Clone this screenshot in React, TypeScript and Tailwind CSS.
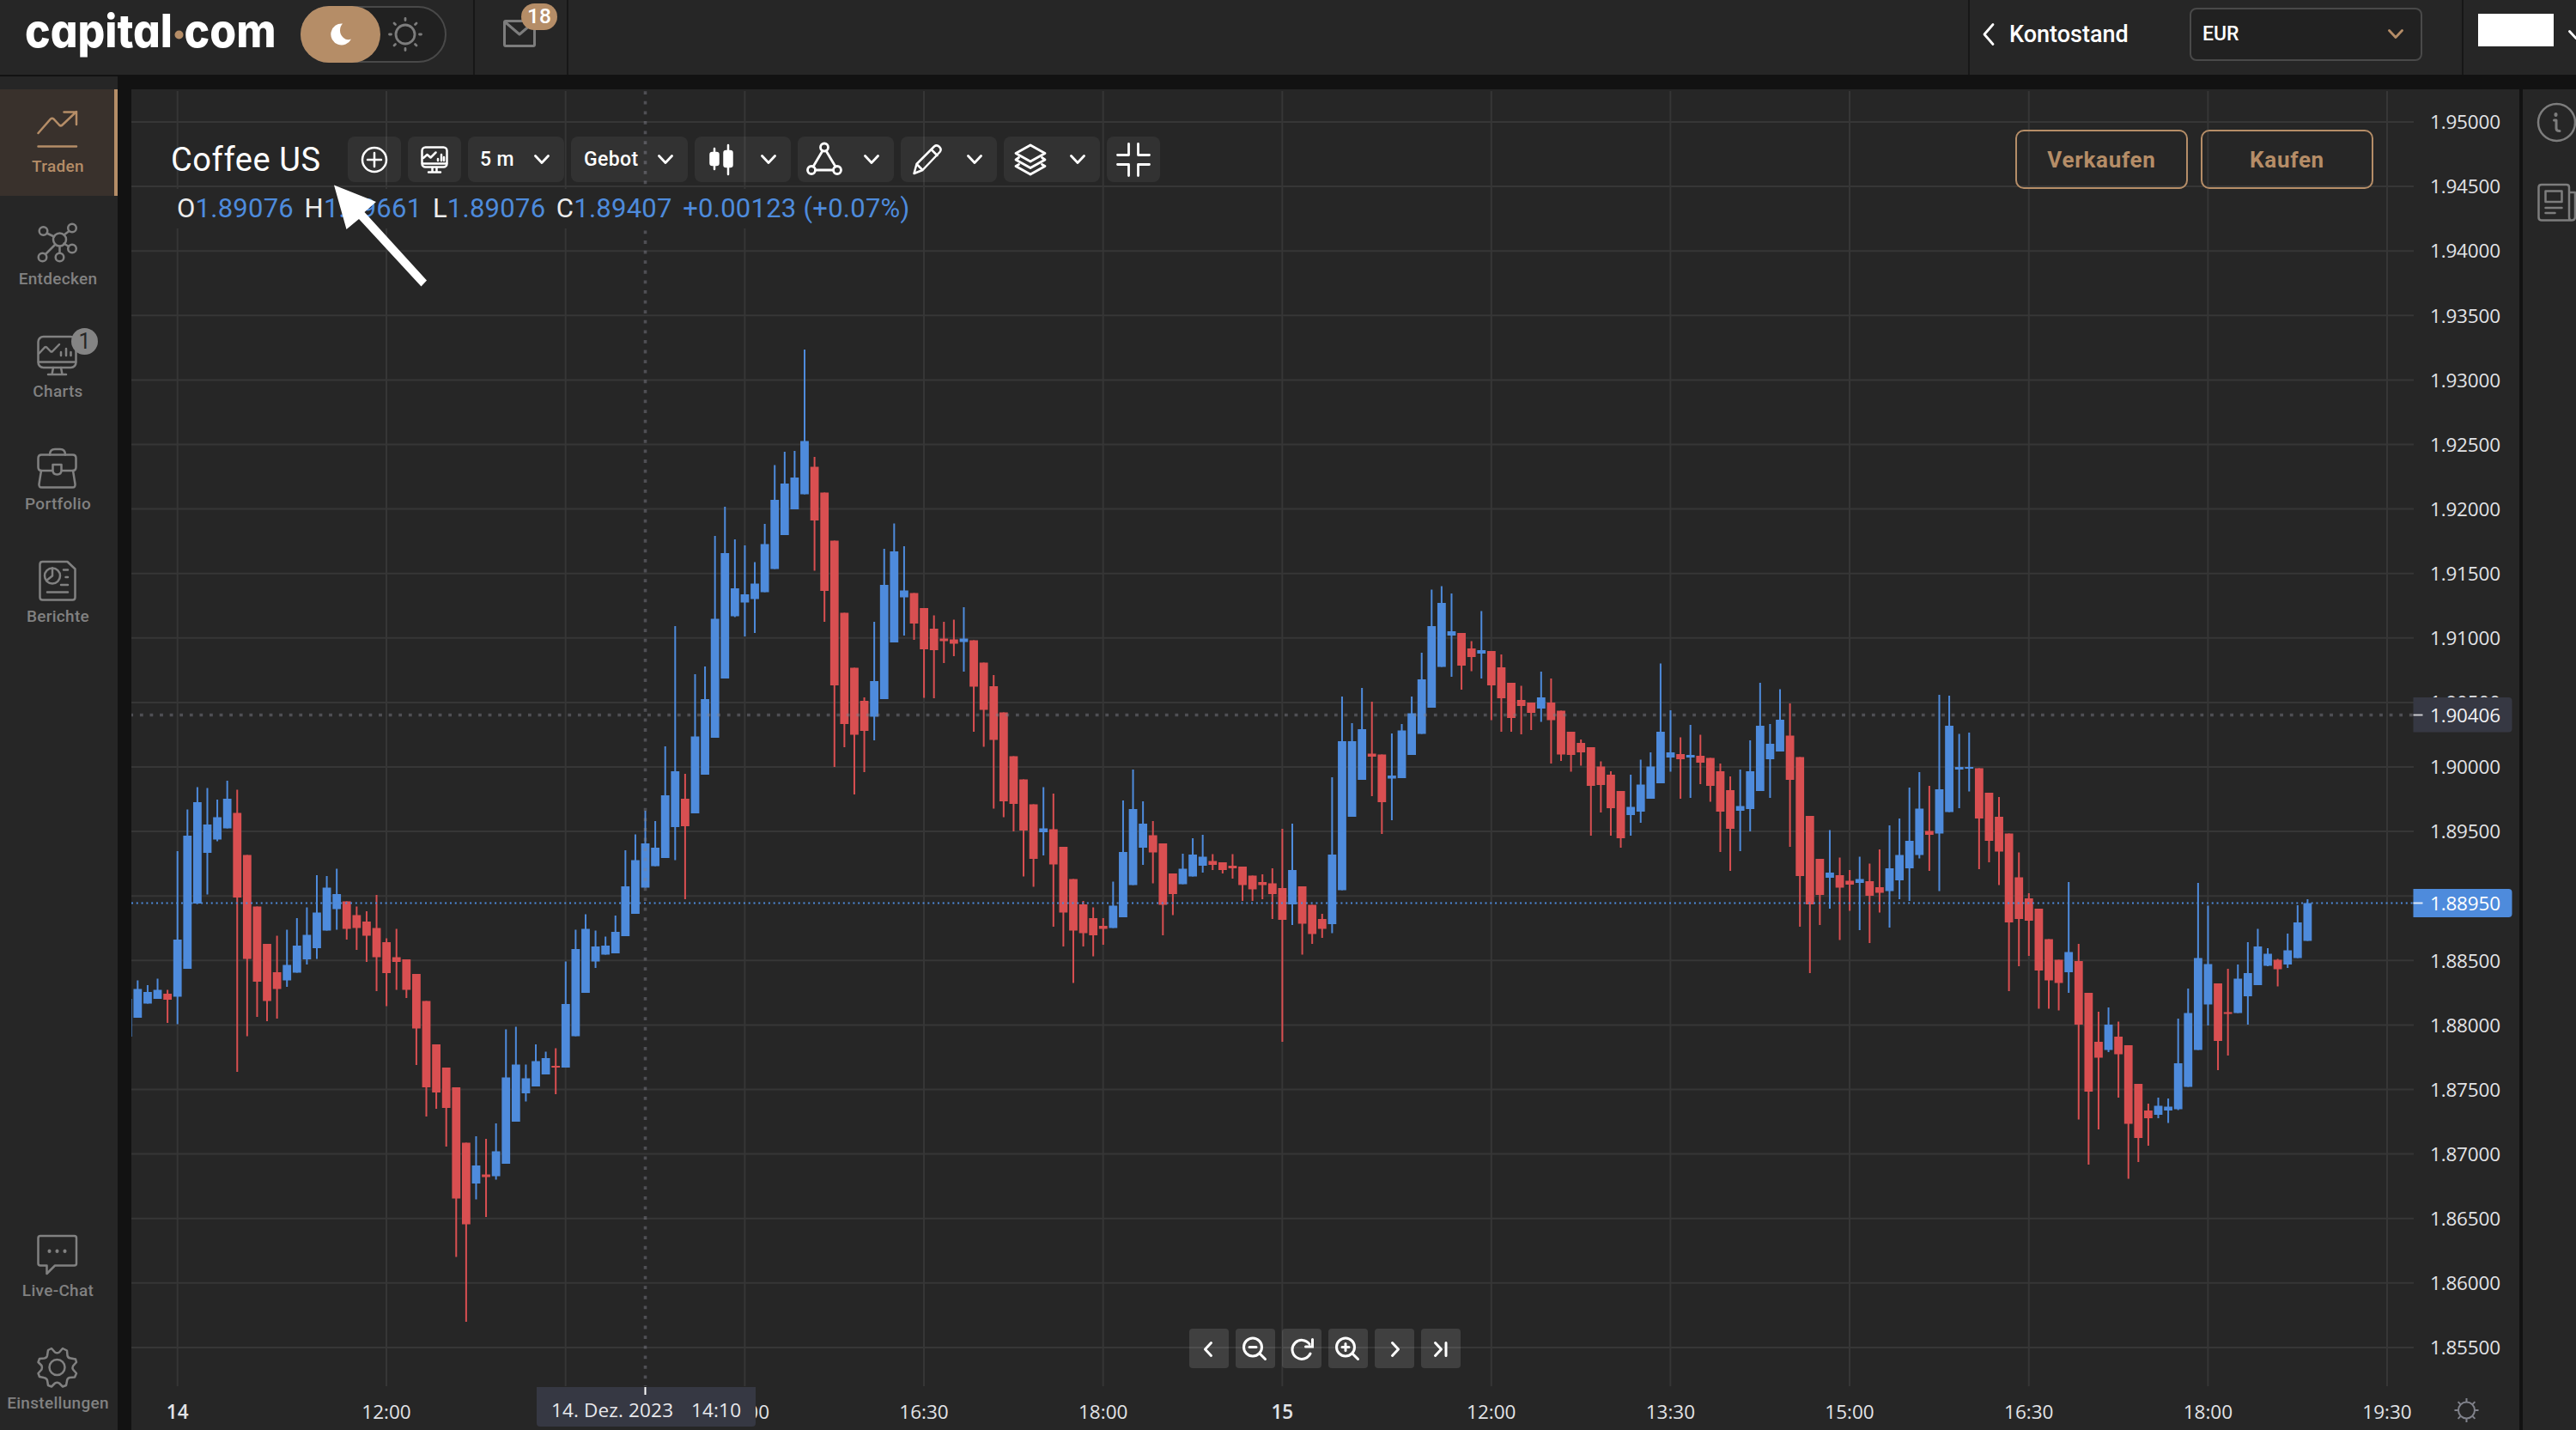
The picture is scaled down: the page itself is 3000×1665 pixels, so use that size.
import { type ReactNode } from "react";

// [high, bodyTop, bodyBottom, low, rising]
type Candle = [number, number, number, number, 0 | 1];

const FIRST_INDEX = -5;
const ORIGIN_X = 206.7;
const STEP_X = 11.592;

const candles: Candle[] = [
  [1163, 1163, 1207, 1207, 1], [1141.5, 1151.5, 1185, 1185, 1], [1147, 1155, 1168.5, 1168.5, 1],
  [1139.5, 1152.5, 1163, 1163, 1], [1152.5, 1157, 1164, 1191, 0], [991, 1094, 1160.5, 1192.5, 1],
  [942.5, 973, 1128, 1128, 1], [916.5, 934, 1052, 1052.5, 1], [917.5, 960, 993, 1041.5, 1],
  [931, 951.5, 977.5, 979.5, 1], [909, 930, 964.5, 964.5, 1], [919.5, 946.5, 1045, 1248, 0],
  [995.5, 995.5, 1116.5, 1206.5, 0], [1055.5, 1055.5, 1143, 1184, 0], [1099, 1099, 1165.5, 1189, 0],
  [1089.5, 1132, 1151.5, 1186, 0], [1082.5, 1123.5, 1141.5, 1149, 1], [1069, 1101, 1132.5, 1132.5, 1],
  [1056.5, 1088.5, 1117, 1123, 1], [1019, 1062.5, 1104, 1116.5, 1], [1020, 1033.5, 1083.5, 1083.5, 1],
  [1011.5, 1041, 1058.5, 1082.5, 1], [1049.5, 1049.5, 1081.5, 1094, 0], [1055.5, 1065.5, 1080.5, 1106, 0],
  [1061, 1073, 1089.5, 1120, 0], [1042, 1080.5, 1114.5, 1154, 0], [1092.5, 1097, 1133, 1171.5, 0],
  [1081.5, 1114.5, 1120, 1152.5, 0], [1117, 1117, 1152.5, 1162, 0], [1134, 1134, 1197.5, 1240, 0],
  [1165.5, 1165.5, 1266, 1300, 0], [1216, 1216, 1272, 1291, 0], [1243, 1243, 1290, 1335, 0],
  [1266, 1266, 1395.5, 1463.5, 0], [1330.5, 1330.5, 1425.5, 1539, 0], [1323, 1357, 1378, 1396.5, 1],
  [1326, 1367.5, 1370.5, 1417, 0], [1308, 1340.5, 1369.5, 1373.5, 1], [1198.5, 1254.5, 1355, 1355, 1],
  [1195.5, 1239.5, 1306, 1306, 1], [1239.5, 1255.5, 1273, 1282.5, 1], [1216, 1235.5, 1265, 1265, 1],
  [1224.5, 1232, 1251, 1251, 1], [1220.5, 1241, 1243, 1274, 0], [1119.5, 1169, 1243, 1243, 1],
  [1082.5, 1105, 1206.5, 1206.5, 1], [1064.5, 1081.5, 1156, 1156, 1], [1083.5, 1102, 1119.5, 1127, 1],
  [1090.5, 1101, 1111.5, 1111.5, 1], [1066, 1085, 1110, 1110, 1], [990, 1032, 1090, 1090, 1],
  [971.5, 1001.5, 1064, 1064, 1], [944, 982, 1033.5, 1033.5, 1], [956, 987, 1008.5, 1008.5, 1],
  [869, 926, 999, 999, 1], [729, 898, 963, 1001.5, 1], [901, 930, 962, 1047, 0],
  [785, 857.5, 947, 947, 1], [776, 814, 902, 902, 1], [624, 720.5, 859, 859, 1],
  [590, 644, 790, 790, 1], [628, 685, 717.5, 718.5, 1], [635, 692, 701.5, 741, 1],
  [654.5, 679.5, 697.5, 737, 1], [610, 633.5, 689.5, 689.5, 1], [541.5, 582, 662.5, 662.5, 1],
  [526, 563, 623, 623, 1], [525, 556, 593, 593, 1], [407, 513.5, 575.5, 575.5, 1],
  [532, 543.5, 606, 664.5, 0], [573.5, 573.5, 688, 724, 0], [629.5, 629.5, 798, 893, 0],
  [713.5, 713.5, 843, 870, 0], [777.5, 777.5, 855.5, 925, 0], [812, 816, 851, 899, 0],
  [724, 793, 834.5, 862, 1], [639, 681, 814, 814, 1], [609.5, 642, 748, 748, 1],
  [636, 687.5, 695.5, 740, 1], [690.5, 690.5, 726, 745, 0], [708, 708, 756, 812.5, 0],
  [716.5, 732, 757, 813, 0], [724, 743.5, 746.5, 772, 0], [721.5, 744.5, 749.5, 764, 0],
  [707, 743.5, 747.5, 782, 1], [745.5, 745.5, 799.5, 852, 0], [771.5, 771.5, 826.5, 869.5, 0],
  [786, 799, 861.5, 941.5, 0], [829.5, 829.5, 933, 951.5, 0], [880.5, 880.5, 936, 968, 0],
  [907.5, 907.5, 967, 1020.5, 0], [936.5, 936.5, 1000, 1032.5, 0], [916.5, 964.5, 969, 996, 1],
  [924, 965.5, 1006.5, 1079, 0], [986, 986, 1062.5, 1102, 0], [1023.5, 1023.5, 1083.5, 1144.5, 0],
  [1049, 1053, 1086.5, 1102, 0], [1056.5, 1069, 1089, 1113.5, 0], [1069, 1078, 1081.5, 1100, 0],
  [1026.5, 1054.5, 1080.5, 1080.5, 1], [932, 992, 1068, 1068, 1], [896, 942, 1030.5, 1030.5, 1],
  [933, 959, 987, 1007, 1], [956, 972.5, 992.5, 1028.5, 0], [982, 982, 1053.5, 1089, 0],
  [1017, 1017, 1041, 1065.5, 0], [994, 1011.5, 1029.5, 1029.5, 1], [976, 995, 1020.5, 1020.5, 1],
  [972, 997.5, 1008, 1016, 1], [994.5, 1002.5, 1007, 1013, 0], [1004, 1004, 1013, 1017, 0],
  [994.5, 1008, 1011, 1023, 0], [1009, 1009, 1030.5, 1049, 0], [1019.5, 1019.5, 1035.5, 1049, 0],
  [1018, 1027, 1030.5, 1047, 0], [1011, 1028.5, 1041, 1070, 0], [965, 1034, 1071, 1213, 0],
  [959, 1013, 1053, 1077, 1], [1032, 1032, 1075.5, 1111.5, 0], [1053.5, 1053.5, 1087.5, 1099, 0],
  [1064, 1070, 1081.5, 1092, 0], [905, 995, 1076, 1086.5, 1], [811, 863, 1036.5, 1036.5, 1],
  [842, 863, 951, 951, 1], [801, 849, 908, 908, 1], [817, 877.5, 881, 927, 0],
  [878.5, 878.5, 934, 971, 0], [854, 903, 906.5, 955, 1], [843, 850.5, 906, 906, 1],
  [811, 830.5, 879, 879, 1], [760, 791, 854.5, 854.5, 1], [686.5, 729, 824, 824, 1],
  [682.5, 702, 776.5, 776.5, 1], [691, 735, 740, 788, 1], [737, 737, 775, 803, 0],
  [746.5, 755, 765, 781.5, 0], [711.5, 757, 761, 790, 1], [758, 758, 798, 838.5, 0],
  [762, 777, 813, 852, 0], [795, 795, 836, 852, 0], [798.5, 815, 822, 855, 0],
  [818, 818, 830, 850, 0], [782, 812, 825, 840.5, 1], [790, 818, 838.5, 889, 0],
  [827.5, 827.5, 878.5, 886, 0], [852, 852, 879, 898.5, 0], [861, 865, 876, 891.5, 0],
  [870, 870, 915, 973, 0], [886.5, 892.5, 914, 946, 0], [898, 902, 941, 973, 0],
  [921, 921, 976, 987, 0], [902, 939.5, 949, 973, 1], [884.5, 913.5, 945, 958, 1],
  [876, 892.5, 930, 930, 1], [772.5, 852, 912, 912, 1], [827, 876, 882, 898.5, 1],
  [858.5, 878, 884, 930, 0], [844, 879, 882, 929, 1], [855.5, 880, 888, 913, 0],
  [882.5, 882.5, 915, 933.5, 0], [889, 898, 945, 992, 0], [904, 920, 965, 1014, 0],
  [896, 938.5, 944, 991, 1], [862, 898, 942, 968, 1], [795, 845, 921, 921, 1],
  [843, 866, 884, 929, 1], [802.5, 838, 875, 875, 1], [819, 856.5, 908, 986, 0],
  [881.5, 881.5, 1020, 1079, 0], [950, 950, 1053, 1133, 0], [1000, 1000, 1042, 1077, 0],
  [966.5, 1016, 1022, 1058, 1], [998.5, 1019, 1033.5, 1094.5, 0], [1013, 1025.5, 1030, 1060.5, 0],
  [997.5, 1023.5, 1028, 1083, 1], [1005.5, 1026, 1043, 1098, 0], [989, 1033, 1039.5, 1062.5, 0],
  [961, 1011, 1037.5, 1080, 1], [953, 995.5, 1025, 1047, 1], [917, 979, 1011, 1049, 1],
  [899, 941.5, 995.5, 999.5, 1], [915, 967.5, 972, 1014, 0], [809, 919, 970.5, 1037.5, 1],
  [810, 845, 945.5, 945.5, 1], [854.5, 893, 896, 941, 1], [853, 893, 895, 921.5, 1],
  [894.5, 894.5, 953, 1012, 0], [923, 923, 979, 1004, 0], [928, 951, 991.5, 1030.5, 0],
  [970.5, 970.5, 1074, 1154, 0], [992.5, 1021.5, 1070, 1125, 0], [1040, 1046, 1072, 1113, 0],
  [1058, 1058, 1130, 1174.5, 0], [1093.5, 1093.5, 1141.5, 1174.5, 0], [1117.5, 1117.5, 1144.5, 1176.5, 0],
  [1027, 1108.5, 1132, 1156, 1], [1099, 1119, 1193, 1303.5, 0], [1156, 1156, 1271, 1356, 0],
  [1178, 1213, 1231.5, 1315, 0], [1173, 1193, 1222.5, 1225, 1], [1189.5, 1207, 1227.5, 1278, 0],
  [1217, 1217, 1308.5, 1372.5, 0], [1262, 1262, 1325, 1353, 0], [1285, 1293, 1302, 1334, 0],
  [1278, 1287.5, 1298, 1302, 1], [1279, 1288.5, 1293, 1307.5, 1], [1186, 1238, 1291.5, 1292.5, 1],
  [1151, 1179.5, 1265.5, 1265.5, 1], [1028, 1115.5, 1222.5, 1222.5, 1], [1054.5, 1122.5, 1169.5, 1194, 1],
  [1145, 1145, 1212, 1246, 0], [1128, 1178.5, 1180.5, 1229, 0], [1123, 1139.5, 1179.5, 1179.5, 1],
  [1097, 1133, 1160, 1193, 1], [1081.5, 1102, 1147, 1147, 1], [1104, 1110.5, 1124.5, 1125, 1],
  [1116.5, 1117.5, 1128.5, 1148.5, 0], [1087, 1106.5, 1123, 1127, 1], [1054, 1074, 1115.5, 1115.5, 1],
  [1047, 1051.5, 1095.5, 1095.5, 1],
];

const prices = Array.from({ length: 20 }, (_, i) => ({
  label: (1.95 - i * 0.005).toFixed(5),
  y: 142 + i * 75.1,
}));

const times = [
  { x: 206.7, label: "14", strong: true },
  { x: 450, label: "12:00" },
  { x: 658.7, label: "13:30" },
  { x: 867.4, label: "15:00" },
  { x: 1076, label: "16:30" },
  { x: 1284.7, label: "18:00" },
  { x: 1493.3, label: "15", strong: true },
  { x: 1736.8, label: "12:00" },
  { x: 1945.4, label: "13:30" },
  { x: 2154, label: "15:00" },
  { x: 2362.8, label: "16:30" },
  { x: 2571.4, label: "18:00" },
  { x: 2780, label: "19:30" },
];

function Chart() {
  return (
    <svg
      width="2781"
      height="1561"
      viewBox="153 104 2781 1561"
      className="block font-['Open_Sans',sans-serif] text-[22.5px]"
    >
      <g stroke="#363636" strokeWidth="2">
        {prices.map((p) => (
          <line key={p.label} x1="153" x2="2811" y1={p.y} y2={p.y} />
        ))}
        {times.map((t) => (
          <line key={t.x} x1={t.x} x2={t.x} y1="106" y2="1614" />
        ))}
      </g>
      {candles.map(([high, top, bottom, low, rising], i) => {
        const x = ORIGIN_X + (FIRST_INDEX + i) * STEP_X;
        return (
          <g key={i} fill={rising ? "#4e8bdc" : "#d94f51"}>
            <rect x={x - 1} y={high} width="2" height={low - high} />
            <rect x={x - 4.9} y={top} width="9.8" height={bottom - top} />
          </g>
        );
      })}
      <line x1="153" x2="2810" y1="1051.5" y2="1051.5" stroke="#4e8bdc" strokeWidth="1.8" strokeDasharray="2 3.796" />
      <g stroke="#82838f" strokeOpacity="0.45" strokeWidth="3.6">
        <line x1="151.3" x2="2810" y1="832.5" y2="832.5" strokeDasharray="3.8 7.792" />
        <line x1="751.5" x2="751.5" y1="106.2" y2="1614" strokeDasharray="3.8 7.792" />
      </g>

      <g fill="#e2e3e6">
        {prices.map((p) => (
          <text key={p.label} x="2830" y={p.y + 8.2} textLength="82">
            {p.label}
          </text>
        ))}
        {times.map((t) => (
          <text
            key={t.x}
            x={t.x}
            y="1651.5"
            textAnchor="middle"
            className={t.strong ? "font-semibold" : "font-normal"}
          >
            {t.label}
          </text>
        ))}
      </g>

      <path d="M2810.5 812h111q4 0 4 4v32.500q0 4-4 4h-111z" fill="#363843" />
      <path d="M2810.500 832.500h11" stroke="#c9cacf" strokeWidth="2" />
      <text x="2830" y="840.5" textLength="82" fill="#f0f0f3">1.90406</text>

      <path d="M2810.500 1035h111q4 0 4 4v25q0 4-4 4h-111z" fill="#4e8bdc" />
      <path d="M2810.500 1051.500h11" stroke="#dbe7f8" strokeWidth="2" />
      <text x="2830" y="1059.5" textLength="82" fill="#ffffff">1.88950</text>

      <path d="M625 1615h255v42q0 4-4 4h-247q-4 0-4-4z" fill="#363843" />
      <path d="M751.500 1615v9" stroke="#ffffff" strokeWidth="2" />
      <text x="642" y="1650" textLength="142" fill="#e8e8ec">14. Dez. 2023</text>
      <text x="805" y="1650" textLength="58" fill="#e8e8ec">14:10</text>

      <g fill="none" stroke="#80828b" strokeWidth="2">
        <circle cx="2872.500" cy="1642" r="9.500" />
        <path d="M2872.500 1628v4M2872.500 1652v4M2858.500 1642h4M2882.500 1642h4M2862.600 1632.100l2.800 2.800M2879.600 1649.100l2.800 2.800M2862.600 1651.900l2.800-2.800M2879.600 1634.900l2.800-2.800" />
      </g>
    </svg>
  );
}

function Icon({ size = 48, width = 2.5, children }: { size?: number; width?: number; children: ReactNode }) {
  return (
    <svg
      width={size}
      height={size}
      viewBox={`0 0 ${size} ${size}`}
      fill="none"
      stroke="currentColor"
      strokeWidth={width}
      strokeLinecap="round"
      strokeLinejoin="round"
      className="block shrink-0"
    >
      {children}
    </svg>
  );
}

const TradeIcon = () => (
  <Icon>
    <path d="M1.500 27 16 10.500q1.800-1.500 3.400 0l6.600 7q1.800 1.800 3.600 0L46 2M31.500 2.500H46V17M1.500 42.500H46" strokeLinejoin="miter" />
  </Icon>
);

const DiscoverIcon = () => (
  <Icon>
    <circle cx="26.500" cy="20" r="7.500" />
    <circle cx="7.500" cy="10" r="4.800" />
    <circle cx="41" cy="6.500" r="4.800" />
    <circle cx="41" cy="30.500" r="4.800" />
    <circle cx="6.500" cy="40.500" r="4.800" />
    <circle cx="26.500" cy="40.500" r="4.800" />
    <path d="M11.500 12.500l8.500 4M37.500 10l-6 4.500M37 28l-5.500-3.500M10 37l11.500-11.500M26.500 28v7.500" />
  </Icon>
);

const ChartsIcon = () => (
  <Icon>
    <rect x="1.500" y="2" width="44" height="36" rx="6" />
    <path d="M2 31.500h43M2.500 21.500l6.500-7q1.200-1 2.400 0l4.400 4.500q1.200 1 2.400 0L26 11M28 20v4M34 16v8M39.500 20v4M19 38l-1.500 8M28 38l1.500 8M13 46h21" />
  </Icon>
);

const PortfolioIcon = () => (
  <Icon>
    <path d="M15 8.500Q15 2 21 2h6q6 0 6 6.500" />
    <path d="M5.500 8.500h36q4 0 4 4V23q0 4-4 4h-36q-4 0-4-4V12.500q0-4 4-4z" />
    <path d="M5 27 2.500 42.500q-.5 4 3 4h36q3.500 0 3-4L42 27" />
    <path d="M18.500 20h10v6.500q0 5-5 5t-5-5z" fill="#262626" />
  </Icon>
);

const ReportsIcon = () => (
  <Icon>
    <path d="M6.500 2h29l9 8.500V43.500q0 3-3 3h-35q-3 0-3-3V5q0-3 3-3z" />
    <circle cx="18" cy="18.500" r="9" />
    <path d="M18 9.500v9l-7 5.500M31 11.500h5M33.500 20h2.500M28 29h8M12 37.500h24" />
  </Icon>
);

const ChatIcon = () => (
  <Icon>
    <path d="M4 2h39.500q2.500 0 2.500 2.500V34q0 2.500-2.500 2.500H21L11.500 46v-9.500H4Q1.500 36.500 1.500 34V4.500Q1.500 2 4 2z" />
    <path d="M14.500 19.500v.5M23.500 19.500v.5M32.500 19.500v.5" strokeWidth="4" />
  </Icon>
);

const GearIcon = () => (
  <Icon>
    <circle cx="23.500" cy="24" r="9" />
    <path d="M17 2l4 4.500q2.500 1.500 5 0L30 2l5 2.500.500 6q1 3 4 3L45 14.500l1 3.500-4 4.500q-1 2 0 4L46 31l-2 4.500-6 .5q-3 1-3 4L34 45l-4 1.500-4-4q-2.500-1.500-5 0l-4 4L13 45l-1-6q-1-2.500-4-3l-5-1-1.500-4 4-4.500q1-2 0-4.500L1.500 18 3 14l5.500-.5q3-.5 3.500-3L13 4z" />
  </Icon>
);

const Chevron = () => (
  <Icon size={18} width={2.8}>
    <path d="M1.500 4.500 9 12.500l7.500-8" />
  </Icon>
);

function NavItem({ label, active, badge, children }: { label: string; active?: boolean; badge?: string; children: ReactNode }) {
  return (
    <a
      className={
        active
          ? "relative flex h-[124px] shrink-0 flex-col items-center border-r-4 border-[#b58d67] bg-[#39312c] pt-6 text-[#b58d67]"
          : "relative flex h-[124px] shrink-0 flex-col items-center border-r-4 border-transparent pt-6 text-[#818181]"
      }
    >
      {children}
      <span className="mt-[6px] ml-[2px] text-[19px] leading-6 font-medium tracking-[0.3px] whitespace-nowrap">{label}</span>
      {badge && (
        <span className="absolute top-[16px] left-[83px] flex size-[31px] items-center justify-center rounded-full bg-[#848484] text-[25px] text-[#262626]">
          {badge}
        </span>
      )}
    </a>
  );
}

function ToolButton({ wide, children }: { wide?: boolean; children: ReactNode }) {
  return (
    <button
      className={
        wide
          ? "flex h-[53px] w-[112px] items-center justify-between rounded-lg bg-white/[0.06] pr-[17px] pl-[10px]"
          : "flex h-[53px] w-[62px] items-center justify-center rounded-lg bg-white/[0.06]"
      }
    >
      {children}
      {wide && <Chevron />}
    </button>
  );
}

function Toolbar() {
  return (
    <div className="absolute top-[55px] left-[46px] flex h-[53px] items-center text-white">
      <h1 className="w-[206px] text-[38px] leading-none tracking-[0.6px] whitespace-nowrap">Coffee US</h1>
      <div className="flex gap-2 text-[23px] font-medium">
        <ToolButton>
          <Icon size={34}>
            <circle cx="17" cy="17" r="14" />
            <path d="M17 9v16M9 17h16" />
          </Icon>
        </ToolButton>
        <ToolButton>
          <Icon size={34}>
            <rect x="2.500" y="2.500" width="29" height="23" rx="4" />
            <path d="M3 21.500h28M4 15l4.500-4 4 3.500 6-6M21 16v2M25 11v7M28 14v4M14.500 26v5M19.500 26v5M10 31.500h14" />
          </Icon>
        </ToolButton>
        <button className="flex h-[53px] w-[112px] items-center justify-between rounded-lg bg-white/[0.06] pt-px pr-[17px] pl-[14px] tracking-[0.4px]">
          5 m
          <Chevron />
        </button>
        <button className="flex h-[53px] w-[136px] items-center justify-between rounded-lg bg-white/[0.06] pt-px pr-[17px] pl-[15px] tracking-[0.4px]">
          Gebot
          <Chevron />
        </button>
        <ToolButton wide>
          <Icon size={42}>
            <g fill="currentColor">
              <rect x="8.500" y="13" width="9" height="14" rx="2" />
              <rect x="24.500" y="11" width="9" height="18" rx="2" />
            </g>
            <path d="M13 8v24M29 4v34" />
          </Icon>
        </ToolButton>
        <ToolButton wide>
          <Icon size={42} width={2.8}>
            <circle cx="21" cy="6.500" r="4.500" />
            <circle cx="6" cy="33" r="4.500" />
            <circle cx="36" cy="33" r="4.500" />
            <path d="M19 10.500 8 29M23 10.500 34 29M10.500 33h21" />
          </Icon>
        </ToolButton>
        <ToolButton wide>
          <Icon size={42}>
            <path d="M5.500 37l3-11L29 5.500q3-2.500 6 .5t.500 6L15.500 33zM8.500 26l7 7M25.500 9l7 7" />
          </Icon>
        </ToolButton>
        <ToolButton wide>
          <Icon size={42} width={2.8}>
            <path d="M21 4 38 13.500 21 23 4 13.500z" />
            <path d="M7.500 18.500 4 21l17 9.500L38 21l-3.500-2.500M7.500 26.500 4 28.500 21 38l17-9.500-3.500-2" />
          </Icon>
        </ToolButton>
        <ToolButton>
          <Icon size={42} width={2.8}>
            <path d="M2.500 15.500H15.500V2.500M26.500 2.500V15.500H39.500M2.500 26.500H15.500V39.500M26.500 39.500V26.500H39.500" />
          </Icon>
        </ToolButton>
      </div>
    </div>
  );
}

const ohlc = [
  ["O", "1.89076"],
  ["H", "1.89661"],
  ["L", "1.89076"],
  ["C", "1.89407"],
];

function Legend() {
  return (
    <div className="absolute top-[116px] left-[46px] flex h-[46px] w-[872px] items-center gap-[12.5px] bg-[#262626] pl-[7px] text-[31px] tracking-[0.25px] whitespace-nowrap text-[#4e8bdc]">
      {ohlc.map(([key, value]) => (
        <span key={key}>
          <span className="text-[#ececec]">{key}</span>
          {value}
        </span>
      ))}
      <span>+0.00123 (+0.07%)</span>
    </div>
  );
}

function PlayerButton({ children }: { children: ReactNode }) {
  return (
    <button className="flex size-[46px] items-center justify-center rounded bg-white/[0.12] text-white">
      <Icon size={34} width={3}>
        {children}
      </Icon>
    </button>
  );
}

function NavigationControls() {
  return (
    <div className="absolute top-[1443px] left-[1232px] flex gap-2">
      <PlayerButton>
        <path d="M19.500 10.500l-7 7.500 7 7.500" />
      </PlayerButton>
      <PlayerButton>
        <circle cx="14" cy="15.500" r="10.500" />
        <path d="M22 23l6.500 6.500M10 15.500h8" />
      </PlayerButton>
      <PlayerButton>
        <path d="M27 23A11 11 0 1 1 26 12M29.500 6.500v8.500h-8" strokeLinejoin="miter" />
      </PlayerButton>
      <PlayerButton>
        <circle cx="14" cy="15.500" r="10.500" />
        <path d="M22 23l6.500 6.500M10 15.500h8M14 11.500v8" />
      </PlayerButton>
      <PlayerButton>
        <path d="M14.500 10.500l7 7.500-7 7.500" />
      </PlayerButton>
      <PlayerButton>
        <path d="M10.500 10.500l7 7.500-7 7.500M23 10.500v15" />
      </PlayerButton>
    </div>
  );
}

function Header() {
  return (
    <header className="flex h-[87px] shrink-0 items-stretch bg-[#262626]">
      <div className="flex w-[551px] shrink-0 pt-[7px] pl-[29px]">
        <div className="flex h-[66px] w-[321px] items-center font-['Inter',sans-serif] text-[54px] leading-none font-extrabold text-white [font-feature-settings:'cv11']">
          <svg width="292" height="66" viewBox="0 0 292 66" className="block overflow-visible fill-white">
            <text x="0" y="48" textLength="172" lengthAdjust="spacingAndGlyphs">capital</text>
            <circle cx="179.500" cy="33.500" r="5" fill="#b58d67" />
            <text x="185.500" y="48" textLength="107" lengthAdjust="spacingAndGlyphs">com</text>
          </svg>
        </div>
        <div className="flex h-[66px] w-[170px] rounded-full border-2 border-[#494949] bg-[#212121]">
          <div className="-mt-0.5 -ml-0.5 flex h-[66px] w-[93px] items-center justify-center rounded-full bg-[#b58d67]">
            <svg width="26" height="28" viewBox="0 0 26 28" fill="#ffffff">
              <path d="M15 1.500A12.500 12.500 0 1 0 25 19.500Q20 21.500 16 18T12 9.500Q12 4.500 15 1.500z" />
            </svg>
          </div>
          <div className="flex w-[57px] items-center justify-center text-[#7d7d7d]">
            <Icon size={42} width={2.8}>
              <circle cx="21" cy="21" r="11" />
              <path d="M21 2.500v2M21 37.500v2M2.500 21h2M37.500 21h2M8 8l1.500 1.500M32.500 32.500 34 34M8 34l1.500-1.500M32.500 9.500 34 8" />
            </Icon>
          </div>
        </div>
      </div>
      <div className="relative w-[111px] border-x-2 border-[#171717] text-[#7d7d7d]">
        <svg width="40" height="34" viewBox="0 0 40 34" fill="none" stroke="currentColor" strokeWidth="3" strokeLinejoin="round" className="mt-[22px] ml-[32px] block">
          <rect x="2.500" y="2.500" width="35" height="29" rx="1.500" />
          <path d="M3 3.500 20 18 37 3.500" />
        </svg>
        <span className="absolute top-[4px] left-[54px] flex h-[31px] w-[42px] items-center justify-center rounded-full bg-[#b58d67] text-[24.5px] font-medium text-white">
          18
        </span>
      </div>
      <div className="ml-auto flex w-[708px] shrink-0 items-start border-l-2 border-[#171717] text-white">
        <svg width="16" height="28" viewBox="0 0 16 28" fill="none" stroke="currentColor" strokeWidth="2.800" strokeLinecap="round" strokeLinejoin="round" className="mt-[26px] ml-[14px] shrink-0">
          <path d="M13 2.500 3 14l10 11.500" />
        </svg>
        <span className="mt-[23px] ml-[16px] w-[210px] shrink-0 text-[27px] leading-[34px] font-medium">Kontostand</span>
        <div className="mt-[9px] flex h-[62px] w-[271px] shrink-0 items-center justify-between rounded-lg border-2 border-[#494949] bg-[#212121] pr-[20px] pl-[13px] text-[23px] font-medium">
          EUR
          <span className="text-[#b58d67]">
            <Chevron />
          </span>
        </div>
        <div className="ml-[46px] flex h-[87px] flex-1 items-start overflow-hidden border-l-2 border-[#171717] pl-[17px]">
          <div className="mt-4 h-[38px] w-[88px] shrink-0 bg-white" />
          <div className="mt-[32px] ml-[17px] shrink-0">
            <Chevron />
          </div>
        </div>
      </div>
    </header>
  );
}

export default function App() {
  return (
    <div className="flex h-[1665px] w-[3000px] flex-col overflow-hidden bg-[#121212] font-['Roboto',sans-serif]">
      <Header />
      <div className="flex min-h-0 flex-1">
        <nav className="mt-0.5 flex w-[137px] shrink-0 flex-col gap-[7px] overflow-hidden bg-[#262626] pt-[15px]">
          <NavItem label="Traden" active>
            <TradeIcon />
          </NavItem>
          <NavItem label="Entdecken">
            <DiscoverIcon />
          </NavItem>
          <NavItem label="Charts" badge="1">
            <ChartsIcon />
          </NavItem>
          <NavItem label="Portfolio">
            <PortfolioIcon />
          </NavItem>
          <NavItem label="Berichte">
            <ReportsIcon />
          </NavItem>
          <div className="mt-auto -mb-[3px] flex flex-col gap-[7px]">
            <NavItem label="Live-Chat">
              <ChatIcon />
            </NavItem>
            <NavItem label="Einstellungen">
              <GearIcon />
            </NavItem>
          </div>
        </nav>

        <main className="relative mt-[17px] ml-4 w-[2781px] shrink-0 overflow-hidden bg-[#262626]">
          <Chart />
          <Legend />
          <Toolbar />
          <div className="absolute top-[47px] left-[2194px] flex gap-[15px] text-[26px] font-bold tracking-[0.7px] text-[#b58d67]">
            <button className="h-[69px] w-[201px] rounded-[10px] border-2 border-[#b58d67] pt-px">Verkaufen</button>
            <button className="h-[69px] w-[201px] rounded-[10px] border-2 border-[#b58d67] pt-px">Kaufen</button>
          </div>
          <NavigationControls />
          <svg width="112" height="122" viewBox="0 0 112 122" fill="#ffffff" className="absolute top-[110px] left-[234px]">
            <path d="M2 1.500 51 21 37.500 33 110 112.500 103.500 119.500 31 41 16.500 53z" />
          </svg>
        </main>

        <aside className="mt-[17px] ml-1 flex flex-1 flex-col gap-[46px] overflow-hidden bg-[#262626] pt-[15px] pl-4 text-[#7d7d7d]">
          <Icon size={47}>
            <circle cx="23.500" cy="23.500" r="21.500" />
            <path d="M22.500 14v1" strokeWidth="4" />
            <path d="M20.500 21h2.500v9.500q0 3 4 3" strokeWidth="3" />
          </Icon>
          <Icon size={47}>
            <path d="M6 3h29q3 0 3 3v35q0 3.500 3 3.500H6q-3.500 0-3.500-3.500V6Q2.500 3 6 3zM38 12h7v28q0 4.500-4 4.500" />
            <path d="M10.500 10.500h19V23h-19zM10.500 30h19M10.500 36h11" />
          </Icon>
        </aside>
      </div>
    </div>
  );
}
